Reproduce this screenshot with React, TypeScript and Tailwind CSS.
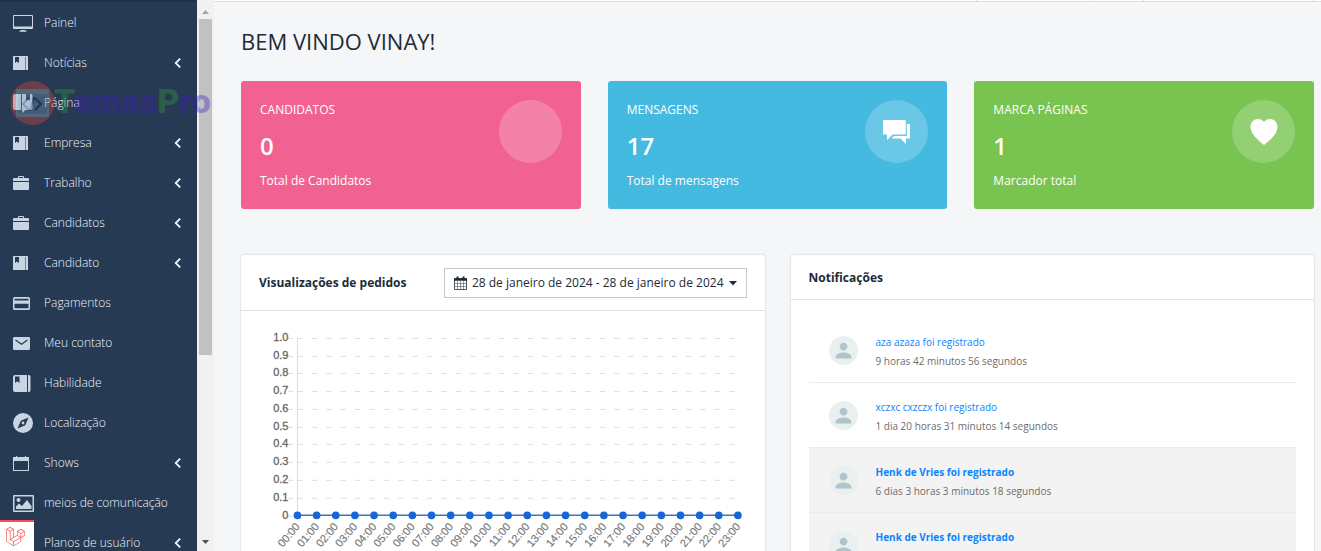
import type { ReactNode } from 'react';
import { IoMdPerson } from 'react-icons/io';
import { SiLaravel } from 'react-icons/si';

const DARK = '#263a53';

const MonitorIcon = () => (
  <svg width="20" height="17" viewBox="0 0 20 17" fill="currentColor">
    <path fillRule="evenodd" d="M1 0h18a1 1 0 0 1 1 1v12a1 1 0 0 1-1 1H1a1 1 0 0 1-1-1V1a1 1 0 0 1 1-1zm0 1v10.500h18V1z" />
    <path d="M8 15h4l2 1.800H6z" />
  </svg>
);

const BookIcon = () => (
  <svg width="15" height="14" viewBox="0 0 15 14" fill="currentColor">
    <rect width="15" height="14" rx="0.6" />
    <path d="M2 1h4v6l-2-1.400-2 1.400z" fill={DARK} />
    <path d="M12 1h1v13h-1z" fill={DARK} opacity="0.55" />
  </svg>
);

const BigBookIcon = () => (
  <svg width="18" height="17" viewBox="0 0 18 17" fill="currentColor">
    <path d="M2 0h12v17H2a2 2 0 0 1-2-2V2a2 2 0 0 1 2-2zM15 0a2 2 0 0 1 2.500 2v13A2 2 0 0 1 15 17z" />
    <path d="M2 1.500h4.500v6.500L4.200 6.200 2 8z" fill={DARK} />
  </svg>
);

const BookmarksIcon = () => (
  <svg width="20" height="19" viewBox="0 0 20 19" fill="currentColor">
    <path d="M2 0h6v16H2a2 2 0 0 1-2-2V2a2 2 0 0 1 2-2zM9 0h4v7l2-2 2 2V0a2 2 0 0 1 2.500 2v12a2 2 0 0 1-2 2H12l-2 3-1-3z" />
  </svg>
);

const BriefcaseIcon = () => (
  <svg width="16" height="14" viewBox="0 0 16 14" fill="currentColor">
    <path d="M1 2h4V1a1 1 0 0 1 1-1h4a1 1 0 0 1 1 1v1h4a1 1 0 0 1 1 1v2H0V3a1 1 0 0 1 1-1zm5 0h4V1H6zM0 6h16v7a1 1 0 0 1-1 1H1a1 1 0 0 1-1-1z" />
  </svg>
);

const CardIcon = () => (
  <svg width="17" height="13" viewBox="0 0 17 13" fill="currentColor">
    <path fillRule="evenodd" d="M1.500 0h14A1.500 1.500 0 0 1 17 1.500v10a1.500 1.500 0 0 1-1.500 1.500h-14A1.500 1.500 0 0 1 0 11.500v-10A1.500 1.500 0 0 1 1.500 0zm0 1.700v1.700h14V1.700zm0 5v4.600h14V6.700z" />
  </svg>
);

const MailIcon = () => (
  <svg width="17" height="13" viewBox="0 0 17 13" fill="currentColor">
    <rect width="17" height="13" rx="1.200" />
    <path d="M2.500 3l6 4.200 6-4.200" fill="none" stroke={DARK} strokeWidth="1.200" />
  </svg>
);

const CompassIcon = () => (
  <svg width="20" height="20" viewBox="0 0 20 20" fill="currentColor">
    <circle cx="10" cy="10" r="10" />
    <path d="M15.500 4.500l-3.300 7.700-7.700 3.300 3.300-7.700z" fill={DARK} />
    <circle cx="10" cy="10" r="1.400" />
  </svg>
);

const CalendarIcon = () => (
  <svg width="16" height="15" viewBox="0 0 16 15" fill="currentColor">
    <path fillRule="evenodd" d="M0 1h3V0h1v1h8V0h1v1h3v14H0zm1 4v9h14V5z" />
  </svg>
);

const PictureIcon = () => (
  <svg width="21" height="17" viewBox="0 0 21 17" fill="currentColor">
    <path fillRule="evenodd" d="M1 0h19a1 1 0 0 1 1 1v15a1 1 0 0 1-1 1H1a1 1 0 0 1-1-1V1a1 1 0 0 1 1-1zm.5 1.500v14h18v-14z" />
    <circle cx="5.500" cy="5" r="2" />
    <path d="M3 14v-2.500L6 8.500l3 2.500 5-6 4.500 6v3z" />
  </svg>
);

const DateIcon = () => (
  <svg width="13" height="14" viewBox="0 0 13 14" fill="none" stroke="currentColor">
    <path d="M0.500 2.500h12v11H0.500z" strokeOpacity="0.800" />
    <path d="M0 3.500h13" strokeWidth="2.500" />
    <path d="M3.500 0.500v2.500M9.500 0.500v2.500" strokeWidth="2" />
    <path d="M3.500 5v8M6.500 5v8M9.500 5v8M1 7.500h11M1 10.500h11" strokeOpacity="0.450" />
  </svg>
);

const ChatIcon = () => (
  <svg width="27" height="24" viewBox="0 0 27 24" fill="currentColor">
    <path d="M0 0h22.700v14.500H9.500L4 20v-5.500H0z" />
    <path d="M23.800 4H27v14.500h-4V24l-5.500-5.500h-9L11 16h12.800z" />
  </svg>
);

const HeartIcon = () => (
  <svg width="28" height="26" viewBox="0 0 28 26" fill="currentColor">
    <path d="M14 26C7 20.500 0.500 14.500 0.500 8 0.500 3.200 3.800 0 7.800 0c2.600 0 4.900 1.200 6.200 3.100C15.300 1.200 17.600 0 20.200 0c4 0 7.300 3.200 7.300 8 0 6.500-6.500 12.500-13.500 18z" />
  </svg>
);

const Chevron = () => (
  <svg width="7" height="10" viewBox="0 0 7 10" fill="none" stroke="currentColor" strokeWidth="1.800">
    <path d="M6.200 0.600L1.700 5l4.500 4.400" />
  </svg>
);

type Item = { label: string; icon: ReactNode; more?: boolean };

const items: Item[] = [
  { label: 'Painel', icon: <MonitorIcon /> },
  { label: 'Notícias', icon: <BookIcon />, more: true },
  { label: 'Página', icon: <BookmarksIcon /> },
  { label: 'Empresa', icon: <BookIcon />, more: true },
  { label: 'Trabalho', icon: <BriefcaseIcon />, more: true },
  { label: 'Candidatos', icon: <BriefcaseIcon />, more: true },
  { label: 'Candidato', icon: <BookIcon />, more: true },
  { label: 'Pagamentos', icon: <CardIcon /> },
  { label: 'Meu contato', icon: <MailIcon /> },
  { label: 'Habilidade', icon: <BigBookIcon /> },
  { label: 'Localização', icon: <CompassIcon /> },
  { label: 'Shows', icon: <CalendarIcon />, more: true },
  { label: 'meios de comunicação', icon: <PictureIcon /> },
  { label: 'Planos de usuário', icon: null, more: true },
];

function Sidebar() {
  return (
    <aside className="flex w-[214px] shrink-0">
      <nav className="flex-1 overflow-hidden border-t-2 border-[#1f3149] bg-[#263a53] pt-px">
        <ul>
          {items.map((item) => (
            <li key={item.label}>
              <a href="#" className="flex h-10 items-center pl-[13px] pr-4 text-[12px] font-light text-[#edf3fa]">
                <span className="flex w-[31px] shrink-0 text-[#c8d5e3]">{item.icon}</span>
                <span className="flex-1 whitespace-nowrap">{item.label}</span>
                {item.more && <Chevron />}
              </a>
            </li>
          ))}
        </ul>
      </nav>
      <div className="flex w-[17px] flex-col items-center bg-[#f1f1f1] pt-2" aria-hidden="true">
        <span className="mb-1 flex h-[7px] items-center">
          <svg width="7" height="4" viewBox="0 0 7 4" fill="#a3a3a3"><path d="M0 4L3.500 0 7 4z" /></svg>
        </span>
        <span className="h-[336px] w-[13px] bg-[#c1c1c1]" />
        <span className="mt-auto mb-[7px]">
          <svg width="7" height="4" viewBox="0 0 7 4" fill="#505050" className="block"><path d="M0 0L3.500 4 7 0z" /></svg>
        </span>
      </div>
    </aside>
  );
}

function Watermark() {
  return (
    <div className="pointer-events-none absolute left-[10px] top-[80px] flex items-start opacity-35" aria-hidden="true">
      <svg width="46" height="46" viewBox="0 0 46 46">
        <circle cx="22.500" cy="23" r="22" fill="#e8483f" />
        <rect x="6" y="9" width="33" height="28" rx="1" fill="#a7bac8" />
        <rect x="8" y="14" width="29" height="20" fill="#7f9db5" />
        <path d="M19 18l-6 6 6 6M25 18l6 6-6 6M24 17l-4 14" fill="none" stroke="#062a78" strokeWidth="2" />
      </svg>
      <span className="-ml-0.5 font-['Roboto',sans-serif] text-[34px] font-black leading-[42px] text-[#3a16c8]">
        <span className="text-[#35a03c]">T</span>emas<span className="text-[#35a03c]">P</span>ro
      </span>
    </div>
  );
}

type StatProps = { title: string; value: string; note: string; color: string; icon?: ReactNode };

function Stat({ title, value, note, color, icon }: StatProps) {
  return (
    <section className={`flex h-32 flex-1 justify-between rounded-[3px] p-[19px] text-white ${color}`}>
      <div className="text-[12px] leading-5">
        <h2>{title}</h2>
        <p className="my-2 text-[24px] font-semibold leading-9">{value}</p>
        <p className="leading-[18px]">{note}</p>
      </div>
      <div className="flex size-[63px] items-center justify-center rounded-full bg-white/20">{icon}</div>
    </section>
  );
}

const hours = Array.from({ length: 24 }, (_, i) => `${String(i).padStart(2, '0')}:00`);
const levels = ['1.0', '0.9', '0.8', '0.7', '0.6', '0.5', '0.4', '0.3', '0.2', '0.1', '0'];

function ViewsChart() {
  const x0 = 56.5;
  const y0 = 26.8;
  const bottom = 204.6;
  const stepY = (bottom - y0) / 10;
  const stepX = 19.17;
  return (
    <svg viewBox="0 0 524 250" className="w-full font-['Liberation_Sans'] text-[11px]" role="img" aria-label="Visualizações de pedidos">
      {levels.map((label, i) => {
        const y = Math.round(y0 + i * stepY) + 0.5;
        return (
          <g key={label}>
            <path d={`M47 ${y}h5`} stroke="#ddd" />
            {i < 10 && <path d={`M${x0} ${y}H497`} stroke="#dedede" strokeDasharray="5.500 8.900" />}
            <text x="47.500" y={y + 3} textAnchor="end" fill="#666" stroke="#666" strokeWidth="0.300">{label}</text>
          </g>
        );
      })}
      <path d={`M${x0} ${y0}V${bottom}`} stroke="#ddd" />
      <path d={`M${x0} 204.500H${x0 + stepX * 23}`} stroke="#3f74c4" strokeWidth="1.500" />
      {hours.map((hour, i) => (
        <g key={hour}>
          <circle cx={x0 + i * stepX} cy="204.600" r="3.800" fill="#1566d6" />
          <text transform={`translate(${x0 + i * stepX + 3} 216) rotate(-50)`} textAnchor="end" fill="#777" stroke="#777" strokeWidth="0.150">{hour}</text>
        </g>
      ))}
    </svg>
  );
}

type Notice = { title: string; time?: string; unread: boolean };

const notices: Notice[] = [
  { title: 'aza azaza foi registrado', time: '9 horas 42 minutos 56 segundos', unread: false },
  { title: 'xczxc cxzczx foi registrado', time: '1 dia 20 horas 31 minutos 14 segundos', unread: false },
  { title: 'Henk de Vries foi registrado', time: '6 dias 3 horas 3 minutos 18 segundos', unread: true },
  { title: 'Henk de Vries foi registrado', unread: true },
];

function Notifications() {
  return (
    <section className="min-w-0 flex-1 rounded-[3px] bg-white shadow-[0_0_2px_rgba(63,63,68,0.3)]">
      <h2 className="border-b border-[#dee3e8] px-[18px] pb-[11px] pt-[13px] text-[12px] font-bold leading-5">Notificações</h2>
      <ul className="p-[18px]">
        {notices.map((n, i) => (
          <li
            key={i}
            className={`flex h-[65px] items-start gap-[18px] border-b border-[#ececec] pl-5 pt-[15px] text-[10px] leading-[19px] ${n.unread ? 'bg-[#f3f3f3]' : ''}`}
          >
            <span className="mt-[3px] flex size-[29px] items-center justify-center rounded-full bg-[#eaeff0] text-[#b0c4cb]">
              <IoMdPerson size={21} />
            </span>
            <div>
              <a href="#" className={`block text-[#0a84ff] ${n.unread ? 'font-bold' : ''}`}>{n.title}</a>
              {n.time && <p className="text-[#6c6c6c]">{n.time}</p>}
            </div>
          </li>
        ))}
      </ul>
    </section>
  );
}

export default function App() {
  return (
    <div className="relative flex h-screen overflow-hidden bg-[#f4f6f8] font-['Open_Sans',sans-serif] text-[#212b36]">
      <Sidebar />
      <div className="min-w-0 flex-1">
        <header className="flex h-0.5 justify-end border-b border-[#d9dde1] bg-white pr-[7px]">
          <span className="w-[117px] border-l border-[#d9dde1]" />
          <span className="w-[50px] border-l border-[#d9dde1]" />
          <span className="w-[171px] border-x border-[#d9dde1]" />
        </header>
        <main className="pl-[27px] pr-[7px] pt-6">
          <h1 className="text-[22px] leading-[30px]">BEM VINDO VINAY!</h1>
          <div className="mt-[25px] flex gap-[27px]">
            <Stat title="CANDIDATOS" value="0" note="Total de Candidatos" color="bg-[#f16293]" />
            <Stat title="MENSAGENS" value="17" note="Total de mensagens" color="bg-[#45bae0]" icon={<ChatIcon />} />
            <Stat title="MARCA PÁGINAS" value="1" note="Marcador total" color="bg-[#79c350]" icon={<HeartIcon />} />
          </div>
          <div className="mt-[46px] flex items-start gap-[26px]">
            <section className="min-w-0 flex-1 rounded-[3px] bg-white shadow-[0_0_2px_rgba(63,63,68,0.3)]">
              <div className="flex items-center justify-between border-b border-[#dee3e8] px-[18px] pb-3 pt-[13px]">
                <h2 className="text-[12px] font-bold">Visualizações de pedidos</h2>
                <button type="button" className="flex h-[30px] items-center gap-[5px] whitespace-nowrap border border-[#c8c8c8] px-[9px] text-[12px]">
                  <DateIcon />
                  28 de janeiro de 2024 - 28 de janeiro de 2024
                  <svg width="8" height="5" viewBox="0 0 8 5" fill="currentColor"><path d="M0 0h8L4 4.500z" /></svg>
                </button>
              </div>
              <ViewsChart />
            </section>
            <Notifications />
          </div>
        </main>
      </div>
      <Watermark />
      <button type="button" aria-label="Laravel Debugbar" className="absolute bottom-0 left-0 flex h-[31px] w-[34px] items-center border-t-2 border-[#ff4d58] bg-white pl-[6px] text-[#f4453a]">
        <SiLaravel size={19} />
      </button>
    </div>
  );
}
